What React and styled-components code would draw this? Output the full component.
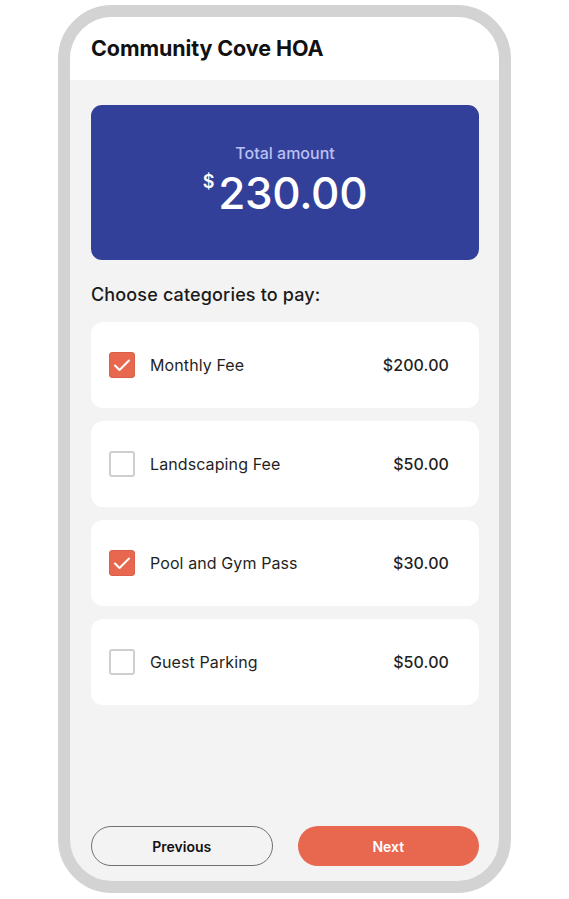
import React from "react";
import styled, { createGlobalStyle } from "styled-components";

const Global = createGlobalStyle`
  html, body { margin: 0; padding: 0; background: #ffffff; }
  body { font-family: Inter, "Noto Sans", "Liberation Sans", sans-serif; -webkit-font-smoothing: antialiased; }
  * { box-sizing: border-box; }
`;

const Page = styled.div`
  width: 569px;
  height: 899px;
  padding: 5px 0 0 58px;
`;

const Phone = styled.div`
  width: 453px;
  height: 888px;
  border: 12px solid #d3d3d3;
  border-radius: 54px;
  overflow: hidden;
  background: #f3f3f3;
  display: flex;
  flex-direction: column;
`;

const Header = styled.header`
  height: 63px;
  background: #ffffff;
  display: flex;
  align-items: center;
  padding: 0 21px 2px;
`;

const Title = styled.h1`
  margin: 0;
  font-size: 21.5px;
  font-weight: 700;
  color: #111;
  letter-spacing: -0.1px;
`;

const Body = styled.main`
  flex: 1;
  display: flex;
  flex-direction: column;
  padding: 25px 20px 15px 21px;
`;

const TotalCard = styled.section`
  height: 155px;
  background: #33409a;
  border-radius: 11px;
  display: flex;
  flex-direction: column;
  align-items: center;
  justify-content: center;
  padding-bottom: 4px;
`;

const TotalLabel = styled.div`
  font-size: 16px;
  color: #b9c0f2;
  font-weight: 500;
  margin-bottom: 5px;
`;

const Amount = styled.div`
  display: flex;
  align-items: flex-start;
  color: #ffffff;
  font-size: 44px;
  font-weight: 500;
  line-height: 50px;
  letter-spacing: -0.3px;
`;

const Currency = styled.span`
  font-size: 18px;
  line-height: 18px;
  font-weight: 600;
  margin: 5px 4px 0 0;
`;

const SectionTitle = styled.h2`
  margin: 24px 0 16px;
  font-size: 18px;
  line-height: 22px;
  font-weight: 500;
  color: #1a1a1a;
  letter-spacing: 0.15px;
`;

const List = styled.div`
  display: flex;
  flex-direction: column;
  gap: 13px;
`;

const Item = styled.label`
  height: 86px;
  background: #ffffff;
  border-radius: 12px;
  display: flex;
  align-items: center;
  padding: 0 30px 0 18px;
  font-size: 16px;
  color: #1f1f1f;
  letter-spacing: 0.1px;
`;

const Box = styled.span`
  width: 26px;
  height: 26px;
  border-radius: 3px;
  flex-shrink: 0;
  display: flex;
  align-items: center;
  justify-content: center;
  background: ${(p) => (p.$checked ? "#e8674f" : "#ffffff")};
  border: ${(p) => (p.$checked ? "1px solid #d9604a" : "2px solid #cfcfcf")};
`;

const Name = styled.span`
  flex: 1;
  margin-left: 15px;
  font-weight: 400;
`;

const Price = styled.span`
  font-weight: 500;
`;

const Footer = styled.div`
  margin-top: auto;
  display: grid;
  grid-template-columns: 1fr 1fr;
  gap: 25px;
`;

const Button = styled.button`
  height: 40px;
  border-radius: 20px;
  font-family: inherit;
  font-size: 14px;
  font-weight: 600;
  cursor: pointer;
  background: ${(p) => (p.$primary ? "#e8674f" : "transparent")};
  color: ${(p) => (p.$primary ? "#ffffff" : "#111111")};
  border: ${(p) => (p.$primary ? "none" : "1px solid #707070")};
`;

const Check = () => (
  <svg width="18" height="14" viewBox="0 0 18 14" fill="none">
    <path d="M2 7.5l4.5 4.5L16 2.5" stroke="#ffffff" strokeWidth="2" strokeLinecap="round" strokeLinejoin="round" />
  </svg>
);

const items = [
  { name: "Monthly Fee", price: "$200.00", checked: true },
  { name: "Landscaping Fee", price: "$50.00", checked: false },
  { name: "Pool and Gym Pass", price: "$30.00", checked: true },
  { name: "Guest Parking", price: "$50.00", checked: false },
];

export default function App() {
  return (
    <Page>
      <Global />
      <Phone>
        <Header>
          <Title>Community Cove HOA</Title>
        </Header>
        <Body>
          <TotalCard>
            <TotalLabel>Total amount</TotalLabel>
            <Amount>
              <Currency>$</Currency>
              230.00
            </Amount>
          </TotalCard>
          <SectionTitle>Choose categories to pay:</SectionTitle>
          <List>
            {items.map((it) => (
              <Item key={it.name}>
                <Box $checked={it.checked}>{it.checked && <Check />}</Box>
                <Name>{it.name}</Name>
                <Price>{it.price}</Price>
              </Item>
            ))}
          </List>
          <Footer>
            <Button>Previous</Button>
            <Button $primary>Next</Button>
          </Footer>
        </Body>
      </Phone>
    </Page>
  );
}
